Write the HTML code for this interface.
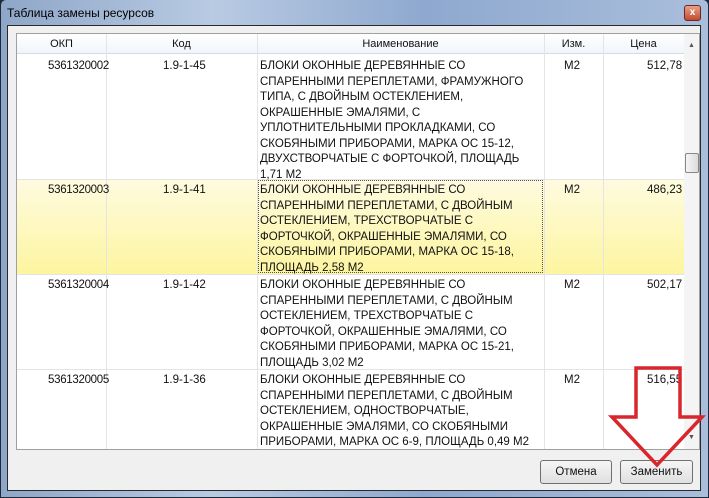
<!DOCTYPE html><html><head><meta charset="utf-8"><style>
*{margin:0;padding:0;box-sizing:border-box}
body{width:709px;height:498px;overflow:hidden;background:#1e2a3a;font-family:"Liberation Sans",sans-serif;font-size:11.5px;color:#111;position:relative}
.frame{position:absolute;left:1px;top:0;width:707px;height:497px;background:linear-gradient(90deg,#8ea6c8,#b9cbe3 30%,#8ea8cf 60%,#a9bedb);border-radius:5px 5px 0 0}
.title{position:absolute;left:7px;top:6px;font-size:12px;color:#000}
.close{position:absolute;left:684px;top:5px;width:17px;height:16px;background:linear-gradient(#e8a08a,#c24a30);border:1px solid #6b2a20;border-radius:3px;color:#fff;font-size:10px;text-align:center;line-height:13px;font-weight:bold}
.client{position:absolute;left:7px;top:25px;width:694px;height:466px;background:#f0f0f0;border:1px solid #2a2a2a}
.grid{position:absolute;left:16px;top:33px;width:684px;height:417px;background:#fff;border:1px solid #a0a0a0;overflow:hidden}
.c{position:absolute;white-space:nowrap;line-height:15.5px}
.n{letter-spacing:-0.3px}
.vl{position:absolute;top:0;width:1px;height:416px;background:#e4e4e4}
.hl{position:absolute;left:0;width:667px;height:1px;background:#e4e4e4}
.hd{position:absolute;left:0;top:0;width:667px;height:20px;background:linear-gradient(#fff,#f1f5fb);border-bottom:1px solid #d5dbe5}
.hd div{position:absolute;top:4px;text-align:center;font-size:11px}
.btn{position:absolute;top:460px;height:24px;border:1px solid #707070;border-radius:3px;background:linear-gradient(#f6f6f6,#e0e0e0);text-align:center;line-height:22px;font-size:11.5px}
</style></head><body>
<div class="frame"></div>
<div class="title">Таблица замены ресурсов</div>
<div class="close">x</div>
<div class="client"></div>
<div class="grid">
<div style="position:absolute;left:0;top:145px;width:667px;height:95px;background:linear-gradient(#fefbe0,#fdf5a0)"></div>
<div class="hd">
<div style="left:0;width:89px">ОКП</div><div style="left:89px;width:151px">Код</div><div style="left:240px;width:287px">Наименование</div><div style="left:527px;width:59px">Изм.</div><div style="left:586px;width:81px">Цена</div></div>
<div class="vl" style="left:89px"></div><div class="vl" style="left:240px"></div><div class="vl" style="left:527px"></div><div class="vl" style="left:586px"></div><div class="vl" style="left:667px;background:#ddd"></div>
<div class="hl" style="top:145px"></div><div class="hl" style="top:240px"></div><div class="hl" style="top:335px"></div>
<div style="position:absolute;left:241px;top:146px;width:285px;height:93px;border:1px dotted #555"></div>
<div class="c n" style="left:31px;top:25px">5361320002</div><div class="c" style="left:146px;top:25px">1.9-1-45</div>
<div class="c" style="left:243px;top:25px">БЛОКИ ОКОННЫЕ ДЕРЕВЯННЫЕ СО<br>СПАРЕННЫМИ ПЕРЕПЛЕТАМИ, ФРАМУЖНОГО<br>ТИПА, С ДВОЙНЫМ ОСТЕКЛЕНИЕМ,<br>ОКРАШЕННЫЕ ЭМАЛЯМИ, С<br>УПЛОТНИТЕЛЬНЫМИ ПРОКЛАДКАМИ, СО<br>СКОБЯНЫМИ ПРИБОРАМИ, МАРКА ОС 15-12,<br>ДВУХСТВОРЧАТЫЕ С ФОРТОЧКОЙ, ПЛОЩАДЬ<br>1,71 М2</div>
<div class="c" style="left:547px;top:25px">М2</div><div class="c" style="left:630px;top:25px">512,78</div>
<div class="c n" style="left:31px;top:149px">5361320003</div><div class="c" style="left:146px;top:149px">1.9-1-41</div>
<div class="c" style="left:243px;top:149px">БЛОКИ ОКОННЫЕ ДЕРЕВЯННЫЕ СО<br>СПАРЕННЫМИ ПЕРЕПЛЕТАМИ, С ДВОЙНЫМ<br>ОСТЕКЛЕНИЕМ, ТРЕХСТВОРЧАТЫЕ С<br>ФОРТОЧКОЙ, ОКРАШЕННЫЕ ЭМАЛЯМИ, СО<br>СКОБЯНЫМИ ПРИБОРАМИ, МАРКА ОС 15-18,<br>ПЛОЩАДЬ 2,58 М2</div>
<div class="c" style="left:547px;top:149px">М2</div><div class="c" style="left:630px;top:149px">486,23</div>
<div class="c n" style="left:31px;top:244px">5361320004</div><div class="c" style="left:146px;top:244px">1.9-1-42</div>
<div class="c" style="left:243px;top:244px">БЛОКИ ОКОННЫЕ ДЕРЕВЯННЫЕ СО<br>СПАРЕННЫМИ ПЕРЕПЛЕТАМИ, С ДВОЙНЫМ<br>ОСТЕКЛЕНИЕМ, ТРЕХСТВОРЧАТЫЕ С<br>ФОРТОЧКОЙ, ОКРАШЕННЫЕ ЭМАЛЯМИ, СО<br>СКОБЯНЫМИ ПРИБОРАМИ, МАРКА ОС 15-21,<br>ПЛОЩАДЬ 3,02 М2</div>
<div class="c" style="left:547px;top:244px">М2</div><div class="c" style="left:630px;top:244px">502,17</div>
<div class="c n" style="left:31px;top:339px">5361320005</div><div class="c" style="left:146px;top:339px">1.9-1-36</div>
<div class="c" style="left:243px;top:339px">БЛОКИ ОКОННЫЕ ДЕРЕВЯННЫЕ СО<br>СПАРЕННЫМИ ПЕРЕПЛЕТАМИ, С ДВОЙНЫМ<br>ОСТЕКЛЕНИЕМ, ОДНОСТВОРЧАТЫЕ,<br>ОКРАШЕННЫЕ ЭМАЛЯМИ, СО СКОБЯНЫМИ<br>ПРИБОРАМИ, МАРКА ОС 6-9, ПЛОЩАДЬ 0,49 М2</div>
<div class="c" style="left:547px;top:339px">М2</div><div class="c" style="left:630px;top:339px">516,55</div>
<div style="position:absolute;left:667px;top:0;width:16px;height:416px;background:#f4f4f4"></div>
<div style="position:absolute;left:671px;top:8px;font-size:7px;color:#555">▲</div>
<div style="position:absolute;left:671px;top:400px;font-size:7px;color:#555">▼</div>
<div style="position:absolute;left:668px;top:119px;width:14px;height:20px;border:1px solid #888;border-radius:2px;background:linear-gradient(90deg,#f4f4f4,#dcdcdc)"></div>
</div>
<div class="btn" style="left:540px;width:72px">Отмена</div>
<div class="btn" style="left:620px;width:73px">Заменить</div>
<svg style="position:absolute;left:0;top:0" width="709" height="498"><path d="M636 368 L680 368 L680 417 L702 417 L657 465 L612 417 L636 417 Z" fill="none" stroke="#d8262c" stroke-width="3.5" stroke-linejoin="miter"/></svg>
</body></html>
